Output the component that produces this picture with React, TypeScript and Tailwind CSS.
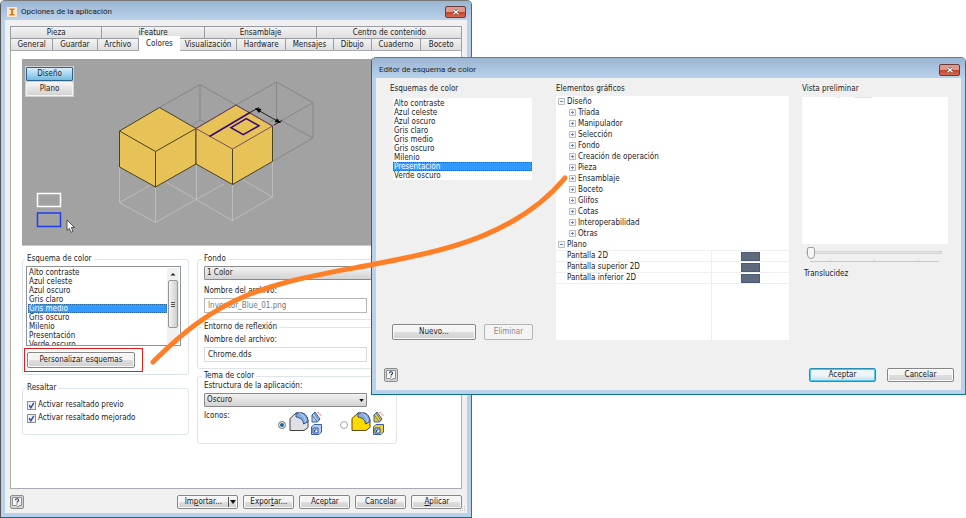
import React, { useState } from "react";

const schemes = [
  "Alto contraste",
  "Azul celeste",
  "Azul oscuro",
  "Gris claro",
  "Gris medio",
  "Gris oscuro",
  "Milenio",
  "Presentación",
  "Verde oscuro",
];

const topTabs = [
  { label: "Pieza", size: "flex-[91]" },
  { label: "iFeature", size: "flex-[102]" },
  { label: "Ensamblaje", size: "flex-[112]" },
  { label: "Centro de contenido", size: "flex-[145]" },
];

const tabs = [
  { label: "General", size: "flex-[42]" },
  { label: "Guardar", size: "flex-[44]" },
  { label: "Archivo", size: "flex-[41]" },
  { label: "Colores", size: "flex-[42]" },
  { label: "Visualización", size: "flex-[57]" },
  { label: "Hardware", size: "flex-[49]" },
  { label: "Mensajes", size: "flex-[47]" },
  { label: "Dibujo", size: "flex-[38]" },
  { label: "Cuaderno", size: "flex-[49]" },
  { label: "Boceto", size: "flex-[41]" },
];

const designItems = [
  "Tríada",
  "Manipulador",
  "Selección",
  "Fondo",
  "Creación de operación",
  "Pieza",
  "Ensamblaje",
  "Boceto",
  "Glifos",
  "Cotas",
  "Interoperabilidad",
  "Otras",
];

const planeItems = ["Pantalla 2D", "Pantalla superior 2D", "Pantalla inferior 2D"];

const buttonLook =
  "flex items-center justify-center rounded-[2px] border border-[#868686] bg-linear-to-b from-[#f4f4f4] from-50% via-[#dfdfdf] via-50% to-[#d0d0d0] shadow-[inset_0_0_0_1px_#fafafa]";

function CloseButton() {
  return (
    <button
      aria-label="Cerrar"
      className="flex h-3 w-[21px] items-center justify-center rounded-[2px] border border-[#6b3a3a] bg-linear-to-b from-[#dd9a8c] from-45% via-[#c2432c] via-50% to-[#d4684f]"
    >
      <svg viewBox="0 0 8 6" className="h-[6px] w-2">
        <path d="M1.5 .8 6.5 5.2M6.5 .8 1.5 5.2" stroke="#5c3030" strokeWidth="2.4" />
        <path d="M1.5 .8 6.5 5.2M6.5 .8 1.5 5.2" stroke="#fff" strokeWidth="1.5" />
      </svg>
    </button>
  );
}

function HelpButton() {
  return (
    <button
      aria-label="Ayuda"
      className="flex size-[14px] items-center justify-center rounded-[2px] border border-[#8d8d8d] bg-[#d4d4d4]"
    >
      <svg viewBox="0 0 12 12" className="size-3" fill="none">
        <path d="M1.5 1.5h9v8H8l-1 1.7L5.2 9.5H1.5z" fill="#f7f7f7" stroke="#8a8f96" />
        <path d="M4.4 4.2c0-2 3.200-2 3.200 0C7.600 5.300 6 5.300 6 6.600M6 7.500v1" stroke="#26374f" strokeWidth="1.100" />
      </svg>
    </button>
  );
}

function SchemeList({ selected, onSelect }: { selected: string; onSelect: (s: string) => void }) {
  return (
    <ul role="listbox" aria-label="Esquemas" className="min-w-0 flex-1">
      {schemes.map((name) => (
        <li
          key={name}
          role="option"
          aria-selected={name === selected}
          onClick={() => onSelect(name)}
          className={
            name === selected
              ? "h-[9px] bg-[#3399ff] px-px leading-[9px] text-white outline-1 -outline-offset-1 outline-dotted outline-[#27679f]"
              : "h-[9px] px-px leading-[9px]"
          }
        >
          {name}
        </li>
      ))}
    </ul>
  );
}

function Preview() {
  return (
    <svg viewBox="22 59 439 186" preserveAspectRatio="xMinYMin slice" className="h-full w-full" fill="none">
      {/* wireframe above and behind the cubes */}
      <g stroke="#868686">
        <path d="M159.500 107.500 200 84.500 236 105M200 84.500V120M192 125 200 120 208 124" />
        <path d="M236 105 276.500 82 313 102.500V138L272.500 161.500M276.500 82V118M313 102.500 272.500 126M313 138 276.500 118 270 122" />
      </g>
      {/* wireframe below */}
      <g stroke="#bdbdbd">
        <path d="M119.500 167V202.500L155.500 222.500 196 199.500 232.500 220.500 272.500 197V161.500" />
        <path d="M155.500 187V222.500M196.500 164V199.500M232.500 184V220.500M119.500 202.500 154 183M196 199.500 166 182M196 199.500 224 184M272.500 197 243 180" />
      </g>
      <g fill="#e7c256" stroke="#4a4022" strokeLinejoin="round">
        <path d="M159.500 107.500 196 128.500V164L155.500 187 119.500 167V131z" />
        <path d="M119.500 131 155.500 151.500 196 128.500M155.500 151.500V187" />
        <path d="M236 105 272.500 126V161.500L232.500 184.500 196 164V128.500z" />
        <path d="M232.500 149V184.500" />
      </g>
      <path d="M236 105 272.500 126 232.500 149 196 128.500z" stroke="#7d4a6c" />
      <path d="M209.500 136.500 250 112.500M231 127.700 246.300 118.700 259 125.700 243.300 134.700z" stroke="#35087d" strokeWidth="1.500" />
      <path d="M250 112.500 259 107.500M257 109.500 279 122M274 125 282 120.500" stroke="#222" />
      <path d="M255 108 261.500 109 259 113zM281 123 274.500 122 277 118.500z" fill="#000" />
      <path d="M37.500 193.500h23v13h-23z" stroke="#fff" strokeWidth="1.500" />
      <path d="M37.500 213h23v13.500h-23z" stroke="#1c3ff0" strokeWidth="1.500" />
      <path d="M67 220v10.500l2.300-2.200 1.800 4 2-.9-1.800-3.900h3.200z" fill="#fff" stroke="#333" strokeWidth=".8" />
    </svg>
  );
}

function PartIcons({ body, edge, small }: { body: string; edge: string; small: string }) {
  return (
    <svg viewBox="0 0 33 26" className="h-[26px] w-[33px]" fill="none">
      <path d="M1 8.500 7 3h5c4 0 7 4 7 9v5.500l-4 3H1z" fill={body} stroke={edge} />
      <path d="M7 3h5c4 0 7 4 7 8.500L14.500 14c0-4-3.500-6.500-7.500-7z" fill="#86abdf" stroke="#2b4e8c" />
      <path d="M10 3c4 1 6 4 6.500 9" stroke="#d5e4f8" strokeWidth=".8" />
      <path d="m23 5 3-3 5 7-2.500 3H23z" fill={small} stroke="#3c5f98" />
      <path d="m23 5 5.500 7M25 3l5 7.500" stroke="#3c5f98" strokeWidth=".8" />
      <path d="M28.500 2 32 5.500" stroke="#d03434" strokeDasharray="2 1" />
      <path d="M22.500 17 25 14.500h7.500V22L30 24.500h-7.500z" fill={small} stroke="#3c5f98" />
      <path d="M24 18h5v5h-5z" fill="#e6f0ff" stroke="#224caa" />
      <path d="M25.500 22v-2H27v-1.500" stroke="#224caa" />
    </svg>
  );
}

function Dropdown({ id, value }: { id: string; value: string }) {
  return (
    <div className="relative">
      <select
        id={id}
        aria-label={value}
        className="block h-[14px] w-full appearance-none rounded-[1px] border border-[#8a8a8a] bg-linear-to-b from-[#f2f2f2] to-[#d3d3d3] px-[2px] leading-3"
      >
        <option>{value}</option>
      </select>
      <svg viewBox="0 0 6 4" className="pointer-events-none absolute top-[6px] right-[3px] h-[3px] w-[5px]">
        <path d="M0 0h6L3 4z" fill="#111" />
      </svg>
    </div>
  );
}

function TreeBox({ open }: { open?: boolean }) {
  return (
    <svg viewBox="0 0 7 7" className="size-[7px] shrink-0" fill="none">
      <path d="M.5.5h6v6h-6z" fill="#f6f6f6" stroke="#bcbcbc" />
      <path d={open ? "M2 3.5h3" : "M2 3.5h3M3.5 2v3"} stroke="#6f86b8" />
    </svg>
  );
}

function OptionsWindow() {
  const [scheme, setScheme] = useState("Gris medio");
  const [view, setView] = useState("Diseño");
  const group = "min-w-0 rounded-[3px] border border-[#dde5ea]";
  const legend = "-ml-[2px] px-[2px] leading-[10px]";

  return (
    <section className="flex min-h-screen w-[48.9%] flex-col rounded-t-[5px] border border-t-[#777] border-r-[#1b7d86] border-b-[#0d7282] border-l-[#555] bg-[#b9d1ea] px-1 pb-1">
      <header className="-mx-1 flex h-[19px] items-center gap-1 rounded-t-[4px] bg-linear-to-b from-[#9ab5d3] to-[#b9d1ea] pt-[2px] pr-[5px] pl-[6px]">
        <svg viewBox="0 0 10 10" className="size-[10px]">
          <path d="M0 0h10v10H0z" fill="#fbe6d0" />
          <path d="M2.5 1.5h5v1.500H6v4h1.500v1.500h-5V7H4V3H2.500z" fill="#dc7a1d" />
        </svg>
        <h1 className="flex-1 font-[Roboto,sans-serif]">Opciones de la aplicación</h1>
        <CloseButton />
      </header>

      <div className="relative flex flex-1 flex-col bg-[#f0f0f0] px-[5px] pt-[6px]">
        <div role="tablist" className="flex h-3 border-t border-l border-[#9a9ca3]">
          {topTabs.map((t) => (
            <button key={t.label} role="tab" className={`${t.size} border-r border-[#9a9ca3] bg-linear-to-b from-[#f3f3f3] to-[#dedede] leading-[11px]`}>
              {t.label}
            </button>
          ))}
        </div>
        <div role="tablist" className="flex h-3 items-end border-l border-[#9a9ca3]">
          {tabs.map((t) => (
            <button
              key={t.label}
              role="tab"
              aria-selected={t.label === "Colores"}
              className={
                t.label === "Colores"
                  ? `${t.size} z-10 -mb-px h-[15px] bg-white`
                  : `${t.size} h-3 border-t border-r border-[#9a9ca3] bg-linear-to-b from-[#f3f3f3] to-[#dedede] leading-[11px]`
              }
            >
              {t.label}
            </button>
          ))}
        </div>

        <div className="flex flex-1 flex-col border border-[#a9abb3] bg-white px-[11px] pt-2">
          <div className="relative h-[187px] border-b border-[#c8c8c8] bg-[#a2a2a2]">
            <Preview />
            <div className="absolute top-[7px] left-[3px] flex w-[49px] flex-col gap-px bg-[#d0d0d0] p-px">
              {["Diseño", "Plano"].map((name) => (
                <button
                  key={name}
                  onClick={() => setView(name)}
                  className={
                    name === view
                      ? "h-[14px] rounded-[1px] border border-[#2c628b] bg-linear-to-b from-[#d9effb] to-[#72bbe0]"
                      : "h-[14px] rounded-[1px] border border-[#f4f4f4] bg-linear-to-b from-[#f4f4f4] to-[#d3d3d3]"
                  }
                >
                  {name}
                </button>
              ))}
            </div>
          </div>

          <div className="flex gap-2 pt-2">
            <div className="flex w-[167px] flex-col gap-2">
              <fieldset className={`${group} h-[121px] px-px`}>
                <legend className="ml-px px-[2px] leading-[10px]">Esquema de color</legend>
                <div className="mt-[2px] mr-[6px] ml-[2px] flex h-[80px] overflow-hidden border border-[#8d929b] p-px">
                  <SchemeList selected={scheme} onSelect={setScheme} />
                  <div aria-hidden="true" className="flex w-3 flex-col items-center bg-[#f1f1f1]">
                    <svg viewBox="0 0 12 12" className="size-3">
                      <path d="M3.5 7.5h5L6 5z" fill="#222" />
                    </svg>
                    <div className="flex h-12 w-[10px] flex-col items-center justify-center gap-px rounded-[2px] border border-[#969696] bg-linear-to-r from-[#f5f5f5] to-[#cfcfcf]">
                      <i className="h-px w-1 bg-[#555]" />
                      <i className="h-px w-1 bg-[#555]" />
                      <i className="h-px w-1 bg-[#555]" />
                    </div>
                  </div>
                </div>
                <div className="mt-[2px] w-[119px] border border-[#f01818] px-[2px] py-[3px]">
                  <button className={`${buttonLook} h-[16px] w-[108px]`}>Personalizar esquemas</button>
                </div>
              </fieldset>
              <fieldset className={`${group} h-[52px] px-1`}>
                <legend className={legend}>Resaltar</legend>
                <div className="flex flex-col gap-[3px] pt-[7px]">
                  {["Activar resaltado previo", "Activar resaltado mejorado"].map((name) => (
                    <label key={name} className="flex h-[10px] items-center gap-[2px]">
                      <span className="relative flex size-[9px]">
                        <input
                          type="checkbox"
                          defaultChecked
                          className="peer size-[9px] appearance-none border border-[#8e8f8f] bg-[#eef1f4]"
                        />
                        <svg viewBox="0 0 9 9" fill="none" className="pointer-events-none absolute inset-0 hidden size-[9px] peer-checked:block">
                          <path d="m2.2 4.200 1.600 2.600L6.800 1.800" stroke="#31479e" strokeWidth="1.400" />
                        </svg>
                      </span>
                      {name}
                    </label>
                  ))}
                </div>
              </fieldset>
            </div>

            <div className="flex w-[200px] flex-col gap-[2px]">
              <fieldset className={`${group} h-[66px] px-[6px]`}>
                <legend className={legend}>Fondo</legend>
                <div className="-mr-6 mt-[2px]">
                  <Dropdown id="fondo" value="1 Color" />
                </div>
                <label htmlFor="fondo-file" className="mt-[6px] block leading-[10px]">Nombre del archivo:</label>
                <input
                  id="fondo-file"
                  disabled
                  defaultValue="Inventor_Blue_01.png"
                  className="mt-[2px] block h-[15px] w-[163px] border border-[#b5b5b5] bg-white px-[3px] text-[#777]"
                />
              </fieldset>
              <fieldset className={`${group} h-[47px] px-[6px]`}>
                <legend className={legend}>Entorno de reflexión</legend>
                <label htmlFor="reflex-file" className="mt-[3px] block leading-[10px]">Nombre del archivo:</label>
                <input
                  id="reflex-file"
                  defaultValue="Chrome.dds"
                  className="mt-[2px] block h-[15px] w-[163px] border border-[#dadada] bg-white px-[3px]"
                />
              </fieldset>
              <fieldset className={`${group} h-[73px] px-[6px]`}>
                <legend className={legend}>Tema de color</legend>
                <label htmlFor="tema" className="block leading-[10px]">Estructura de la aplicación:</label>
                <div className="mt-[2px] w-[163px]">
                  <Dropdown id="tema" value="Oscuro" />
                </div>
                <div className="flex pt-[3px]">
                  <span className="w-[74px] pt-px leading-[10px]">Iconos:</span>
                  <label className="flex items-center gap-[3px]">
                    <input
                      type="radio"
                      name="iconos"
                      defaultChecked
                      aria-label="Grises"
                      className="mt-1 size-2 appearance-none rounded-full border border-[#8e8f8f] bg-white checked:bg-[#1d5f88] checked:shadow-[inset_0_0_0_1px_#fff]"
                    />
                    <PartIcons body="#dfe1e6" edge="#444" small="#b9cdea" />
                  </label>
                  <label className="ml-[18px] flex items-center gap-[3px]">
                    <input
                      type="radio"
                      name="iconos"
                      aria-label="Amarillos"
                      className="mt-1 size-2 appearance-none rounded-full border border-[#a5a5a5] bg-white checked:bg-[#1d5f88] checked:shadow-[inset_0_0_0_1px_#fff]"
                    />
                    <PartIcons body="#ffd900" edge="#5e4a00" small="#f3cf2c" />
                  </label>
                </div>
              </fieldset>
            </div>
          </div>
        </div>

        <footer className="flex items-center gap-[5px] pt-[6px] pb-1">
          <HelpButton />
          <div className={`${buttonLook} ml-auto h-[14px] w-[61px]`}>
            <button className="flex-1">
              Im<u>p</u>ortar...
            </button>
            <button aria-label="Más opciones" className="flex h-[10px] w-[9px] items-center justify-center border-l border-[#555]">
              <svg viewBox="0 0 6 4" className="h-1 w-[6px]">
                <path d="M0 0h6L3 4z" fill="#111" />
              </svg>
            </button>
          </div>
          <button className={`${buttonLook} h-[14px] w-[51px]`}>
            Expor<u>t</u>ar...
          </button>
          <button className={`${buttonLook} h-[14px] w-[51px]`}>Aceptar</button>
          <button className={`${buttonLook} h-[14px] w-[51px]`}>Cancelar</button>
          <button className={`${buttonLook} h-[14px] w-[51px]`}>
            <u>A</u>plicar
          </button>
        </footer>
        <svg viewBox="0 0 6 6" className="absolute right-px bottom-px size-[6px]" fill="#c4c4c4">
          <path d="M4 0h1v1H4zM2 2h1v1H2zM4 2h1v1H4zM0 4h1v1H0zM2 4h1v1H2zM4 4h1v1H4z" />
        </svg>
      </div>
    </section>
  );
}

function EditorWindow() {
  const [scheme, setScheme] = useState("Presentación");

  return (
    <section className="absolute top-[57px] right-0 left-[38.4%] rounded-t-[5px] border border-t-[#777] border-r-[#1b7d86] border-b-[#0d7282] border-l-[#555] bg-[#b9d1ea] px-1 pb-1">
      <header className="-mx-1 flex h-5 items-center rounded-t-[4px] bg-linear-to-b from-[#9ab5d3] to-[#b9d1ea] pt-[3px] pr-[5px] pl-[7px]">
        <h2 className="flex-1 font-[Roboto,sans-serif]">Editor de esquema de color</h2>
        <CloseButton />
      </header>

      <div className="bg-[#f0f0f0] pt-[6px] pr-[7px] pb-2 pl-2">
        <div className="flex h-[256px]">
          <div className="flex w-[149px] flex-col pl-[6px]">
            <h3 className="leading-[10px]">Esquemas de color</h3>
            <div className="mt-1 mr-px ml-[3px] flex bg-white pt-px">
              <SchemeList selected={scheme} onSelect={setScheme} />
            </div>
            <div className="mt-auto flex gap-2 pl-[2px]">
              <button className={`${buttonLook} h-4 w-[84px] shrink-0`}>Nuevo...</button>
              <button
                disabled
                className="h-4 w-[49px] shrink-0 rounded-[2px] border border-[#b5b5b5] bg-[#f4f4f4] text-[#8b8b8b]"
              >
                Eliminar
              </button>
            </div>
          </div>

          <div className="ml-[23px] flex flex-1 flex-col">
            <h3 className="leading-[10px]">Elementos gráficos</h3>
            <div className="mt-[2px] flex-1 bg-white">
              <table className="h-full w-full table-fixed border-collapse">
                <colgroup>
                  <col className="w-2/3" />
                  <col />
                </colgroup>
                <tbody>
                  <tr className="h-[11px]">
                    <td colSpan={2} className="p-0">
                      <div className="flex h-[11px] items-center gap-[2px] pl-[2px]">
                        <TreeBox open />
                        Diseño
                      </div>
                    </td>
                  </tr>
                  {designItems.map((name) => (
                    <tr key={name} className="h-[11px]">
                      <td colSpan={2} className="p-0">
                        <div className="flex h-[11px] items-center gap-[2px] pl-[13px]">
                          <TreeBox />
                          {name}
                        </div>
                      </td>
                    </tr>
                  ))}
                  <tr className="h-[11px]">
                    <td colSpan={2} className="p-0">
                      <div className="flex h-[11px] items-center gap-[2px] pl-[2px]">
                        <TreeBox open />
                        Plano
                      </div>
                    </td>
                  </tr>
                  {planeItems.map((name) => (
                    <tr key={name} className="h-[11px]">
                      <td className="border-y border-r border-[#eeeeee] p-0">
                        <div className="h-[10px] pl-[11px] leading-[10px]">{name}</div>
                      </td>
                      <td className="border-y border-[#eeeeee] p-0">
                        <div className="ml-[29px] h-[9px] w-[19px] border border-[#4d596c] bg-[#5d6a80]" />
                      </td>
                    </tr>
                  ))}
                  <tr>
                    <td className="border-r border-[#eeeeee] p-0" />
                    <td className="p-0" />
                  </tr>
                </tbody>
              </table>
            </div>
          </div>

          <div className="ml-[13px] flex w-[152px] flex-col">
            <h3 className="leading-[10px]">Vista preliminar</h3>
            <div className="mt-[3px] flex h-[147px] w-[146px] gap-[14px] bg-white pl-[35px]">
              <i className="h-px w-[3px] bg-[#e8e8e8]" />
              <i className="h-px w-[18px] bg-[#dbe6f2]" />
            </div>
            <input
              id="translucidez"
              type="range"
              defaultValue={0}
              className="mt-[2px] ml-1 block h-3 w-[136px] appearance-none bg-transparent [&::-webkit-slider-runnable-track]:h-[3px] [&::-webkit-slider-runnable-track]:border [&::-webkit-slider-runnable-track]:border-[#d0d4d4] [&::-webkit-slider-runnable-track]:bg-[#e4e8e8] [&::-webkit-slider-thumb]:-mt-[5px] [&::-webkit-slider-thumb]:h-3 [&::-webkit-slider-thumb]:w-2 [&::-webkit-slider-thumb]:appearance-none [&::-webkit-slider-thumb]:rounded-t-[2px] [&::-webkit-slider-thumb]:rounded-b-[4px] [&::-webkit-slider-thumb]:border [&::-webkit-slider-thumb]:border-[#a0a0a0] [&::-webkit-slider-thumb]:bg-[#f6f6f6]"
            />
            <div className="mt-[2px] ml-2 flex h-[2px] w-[129px] justify-between border-b border-[#c9c9c9] px-5">
              <i className="h-px w-px bg-[#c4c4c4]" />
              <i className="h-px w-px bg-[#c4c4c4]" />
              <i className="h-px w-px bg-[#c4c4c4]" />
            </div>
            <label htmlFor="translucidez" className="mt-[7px] ml-[2px] leading-[10px]">Translucidez</label>
          </div>
        </div>

        <footer className="mt-7 flex items-center">
          <HelpButton />
          <button className="mr-[11px] ml-auto h-[14px] w-[67px] rounded-[2px] border border-[#2b8fb5] bg-linear-to-b from-[#eef6fa] from-50% to-[#c3dde9] shadow-[inset_0_0_0_1px_#4cc8ef]">
            Aceptar
          </button>
          <button className={`${buttonLook} h-[14px] w-[67px]`}>Cancelar</button>
        </footer>
      </div>
    </section>
  );
}

export default function App() {
  return (
    <main className="relative min-h-screen bg-white font-['DejaVu_Sans_Condensed','DejaVu_Sans',sans-serif] text-[8px] leading-[10px] whitespace-nowrap text-[#222]">
      <OptionsWindow />
      <EditorWindow />
      {/* stroke that joins the button to the tree of the editor */}
      <svg
        viewBox="0 0 966 518"
        preserveAspectRatio="none"
        fill="none"
        className="pointer-events-none absolute inset-0 z-20 h-full w-full"
      >
        <path
          d="M153 362C180 335 208 311 250 294C300 275 345 271 405 258C450 249 520 232 565 178"
          stroke="#ff7f27"
          strokeWidth="5"
          strokeLinecap="round"
        />
      </svg>
    </main>
  );
}
